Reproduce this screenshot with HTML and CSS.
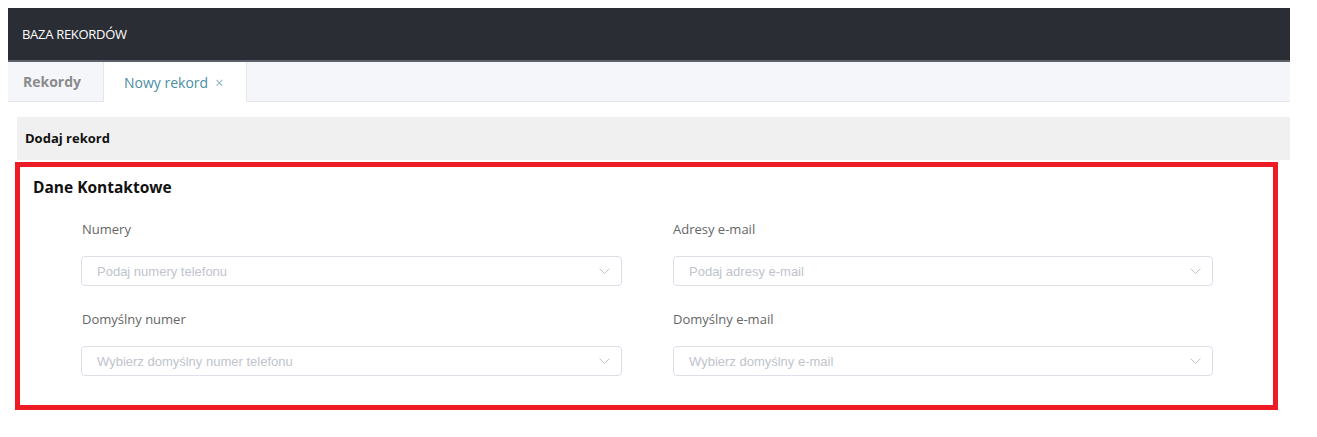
FILE: index.html
```html
<!DOCTYPE html>
<html lang="pl">

<head>
    <meta charset="UTF-8">
    <meta name="viewport" content="width=device-width, initial-scale=1.0">
    <title>Baza rekordów</title>
    <link rel="stylesheet" href="styles.css">
</head>

<body>
    <div class="app">
        <header class="topbar">BAZA REKORDÓW</header>

        <nav class="tabs">
            <div class="tab">Rekordy</div>
            <div class="tab active">Nowy rekord <span class="close">×</span></div>
        </nav>

        <div class="panel-head">Dodaj rekord</div>

        <section class="card">
            <h2 class="card-title">Dane Kontaktowe</h2>
            <div class="grid">
                <div class="field">
                    <label class="label">Numery</label>
                    <div class="select">
                        <span class="placeholder">Podaj numery telefonu</span>
                        <svg class="arrow" width="11" height="6" viewBox="0 0 11 6"><path d="M0.5 0.5l5 5 5-5" fill="none" stroke="#c0c4cc" stroke-width="1"/></svg>
                    </div>
                </div>
                <div class="field">
                    <label class="label">Adresy e-mail</label>
                    <div class="select">
                        <span class="placeholder">Podaj adresy e-mail</span>
                        <svg class="arrow" width="11" height="6" viewBox="0 0 11 6"><path d="M0.5 0.5l5 5 5-5" fill="none" stroke="#c0c4cc" stroke-width="1"/></svg>
                    </div>
                </div>
                <div class="field">
                    <label class="label">Domyślny numer</label>
                    <div class="select">
                        <span class="placeholder">Wybierz domyślny numer telefonu</span>
                        <svg class="arrow" width="11" height="6" viewBox="0 0 11 6"><path d="M0.5 0.5l5 5 5-5" fill="none" stroke="#c0c4cc" stroke-width="1"/></svg>
                    </div>
                </div>
                <div class="field">
                    <label class="label">Domyślny e-mail</label>
                    <div class="select">
                        <span class="placeholder">Wybierz domyślny e-mail</span>
                        <svg class="arrow" width="11" height="6" viewBox="0 0 11 6"><path d="M0.5 0.5l5 5 5-5" fill="none" stroke="#c0c4cc" stroke-width="1"/></svg>
                    </div>
                </div>
            </div>
        </section>
    </div>
</body>

</html>
```

FILE: styles.css
```css
* {
    box-sizing: border-box;
}

body {
    margin: 8px;
    background-color: #fff;
    font-family: 'Open Sans', sans-serif;
}

.app {
    width: 1282px;
}

.topbar {
    height: 54px;
    background-color: #2b2d35;
    border-bottom: 2px solid #5d616a;
    color: #fff;
    font-size: 13px;
    line-height: 52px;
    padding-left: 14px;
    letter-spacing: -0.3px;
}

.tabs {
    display: flex;
    height: 40px;
    background-color: #f5f6fa;
    border-bottom: 1px solid #e4e6eb;
}

.tab {
    display: flex;
    align-items: center;
    white-space: nowrap;
    padding: 0 22px 0 15px;
    font-size: 14px;
    font-weight: bold;
    color: #8a8a8a;
    border-right: 1px solid #e4e6eb;
}

.tab.active {
    padding: 0 23px 0 20px;
    background-color: #fff;
    margin-bottom: -1px;
    font-weight: normal;
    color: #4b8ea3;
}

.close {
    margin-left: 7px;
    color: #8fb3c3;
    font-size: 14px;
}

.panel-head {
    margin: 15px 0 2px 9px;
    height: 43px;
    line-height: 43px;
    padding-left: 8px;
    background-color: #f0f0f0;
    font-size: 13px;
    font-weight: bold;
    color: #111;
}

.card {
    margin-left: 7px;
    width: 1263px;
    border: 5px solid #ed1c24;
    padding: 9px 60px 29px 13px;
}

.card-title {
    margin: 0 0 22px;
    font-size: 15.5px;
    line-height: 22px;
    font-weight: bold;
    color: #111;
}

.grid {
    display: grid;
    grid-template-columns: 541px 540px;
    column-gap: 51px;
    row-gap: 24px;
    padding-left: 48px;
}

.field {
    display: flex;
    flex-direction: column;
}

.label {
    font-size: 13px;
    line-height: 18px;
    color: #666;
    margin: 0 0 18px 1px;
}

.field:nth-child(even) .label {
    margin-left: 0;
}

.select {
    height: 30px;
    border: 1px solid #dcdfe6;
    border-radius: 4px;
    display: flex;
    align-items: center;
    justify-content: space-between;
    padding: 0 11px 0 15px;
}

.placeholder {
    font-family: 'Liberation Sans', Arial, sans-serif;
    font-size: 13px;
    color: #c0c4cc;
}

.arrow {
    display: block;
}
```
